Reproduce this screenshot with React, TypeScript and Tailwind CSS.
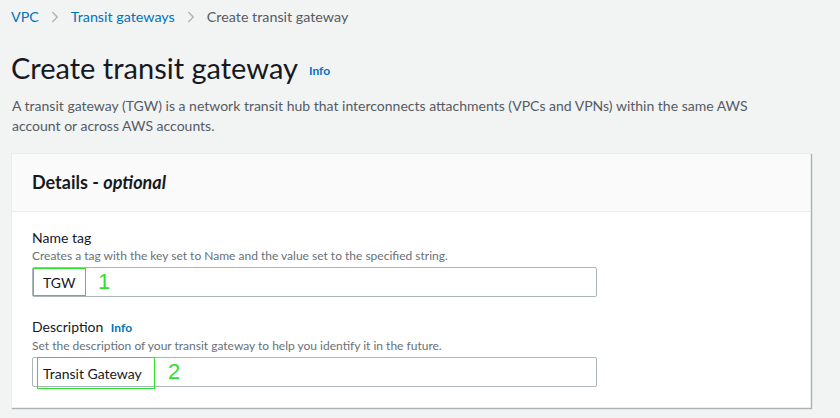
import { ChevronRight } from 'lucide-react';

const font = { fontFamily: 'Lato, "Noto Sans", sans-serif' };

const Crumb = ({ children, current }: { children: string; current?: boolean }) => (
  <span className={current ? 'text-[#545b64]' : 'text-[#0073bb]'}>{children}</span>
);

const App = () => {
  return (
    <div className="min-h-[418px] w-[840px] bg-[#f2f3f3] text-[#16191f]" style={font}>
      {/* Breadcrumbs */}
      <div className="flex items-center h-[34px] pl-[11px] text-[14.3px]">
        <Crumb>VPC</Crumb>
        <ChevronRight size={18} strokeWidth={2} className="mx-[7px] text-[#aab7b8]" />
        <Crumb>Transit gateways</Crumb>
        <ChevronRight size={18} strokeWidth={2} className="mx-[7px] text-[#aab7b8]" />
        <Crumb current>Create transit gateway</Crumb>
      </div>

      {/* Header */}
      <div className="flex items-end mt-[16px] pl-[11px]">
        <h1 className="text-[29px] leading-[36px] font-normal">Create transit gateway</h1>
        <span className="ml-[11px] mb-[6px] text-[12px] font-bold text-[#0073bb]">Info</span>
      </div>
      <p className="mt-[10px] pl-[12px] w-[790px] text-[14px] leading-[20px] text-[#545b64]">
        A transit gateway (TGW) is a network transit hub that interconnects attachments (VPCs and VPNs) within the same AWS
        account or across AWS accounts.
      </p>

      {/* Panel */}
      <div className="mt-[17px] ml-[11px] w-[800px] bg-white border border-[#eaeded] shadow-[1px_1px_1px_0_rgba(0,28,36,0.3)]">
        <div className="h-[58px] flex items-center px-[20px] bg-[#fafafa] border-b border-[#eaeded]">
          <h2 className="text-[18px] font-bold">
            Details - <i>optional</i>
          </h2>
        </div>
        <div className="px-[20px] pt-[17px] pb-[20px]">
          <div>
            <div className="text-[14px] leading-[18px]">Name tag</div>
            <div className="text-[12px] leading-[18px] text-[#687078]">
              Creates a tag with the key set to Name and the value set to the specified string.
            </div>
            <div className="relative mt-[2px] w-[565px] h-[30px] border border-[#aab7b8] rounded-[2px] bg-white">
              <span className="absolute left-0 top-0 h-[28px] w-[53px] border border-[#2fe02f] flex items-center pl-[9px] text-[14px]">
                TGW
              </span>
              <span className="absolute left-[65px] top-[1px] text-[22px] leading-[26px] text-[#2fe02f] font-['Liberation_Sans',sans-serif]">
                1
              </span>
            </div>
          </div>
          <div className="mt-[21px]">
            <div className="text-[14px] leading-[18px]">
              Description <span className="ml-[4px] text-[12px] font-bold text-[#0073bb]">Info</span>
            </div>
            <div className="text-[12px] leading-[18px] text-[#687078]">
              Set the description of your transit gateway to help you identify it in the future.
            </div>
            <div className="relative mt-[2px] w-[565px] h-[30px] border border-[#aab7b8] rounded-[2px] bg-white">
              <span className="absolute left-[4px] top-[-1px] h-[32px] w-[118px] border border-[#2fe02f] flex items-center pl-[5px] text-[14px]">
                Transit Gateway
              </span>
              <span className="absolute left-[135px] top-[1px] text-[22px] leading-[26px] text-[#2fe02f] font-['Liberation_Sans',sans-serif]">
                2
              </span>
            </div>
          </div>
        </div>
      </div>
    </div>
  );
};

export default App;
